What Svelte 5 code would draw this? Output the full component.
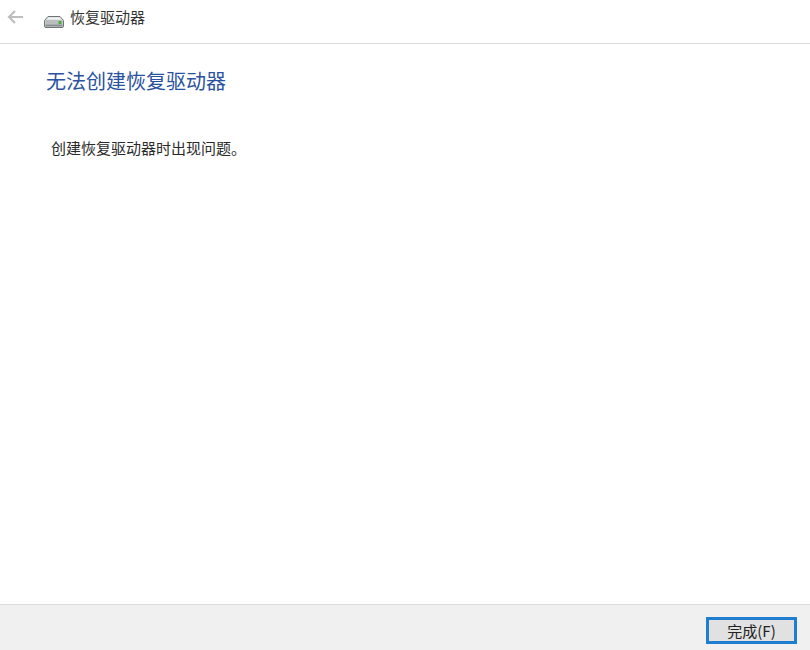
<script>
  const title = '恢复驱动器';
</script>

<div class="window">
  <header class="topbar">
    <svg class="back" width="18" height="14" viewBox="0 0 18 14" aria-hidden="true">
      <path d="M8 1 L2 7 L8 13 M2 7 H16" fill="none" stroke="#bdbdbd" stroke-width="2.2"/>
    </svg>
    <svg class="drive" width="20" height="12" viewBox="0 0 20 12" aria-hidden="true">
      <path d="M4 .5 H16 L19.5 4.5 V10 Q19.5 11.5 18 11.5 H2 Q.5 11.5 .5 10 V4.5 Z" fill="#d4d8d8" stroke="#6f7575"/>
      <path d="M4.5 1.5 H15.5 L17.5 3.5 H2.5 Z" fill="#f2f4f4"/>
      <rect x="1.5" y="4" width="17" height="4.5" fill="#b9bfbf"/>
      <rect x="1.5" y="8.5" width="17" height="2" fill="#868d8d"/>
      <rect x="14.5" y="5" width="3" height="3" fill="#55a83f"/>
    </svg>
    <span class="app-title">{title}</span>
  </header>

  <main class="content">
    <h1>无法创建恢复驱动器</h1>
    <p>创建恢复驱动器时出现问题。</p>
  </main>

  <footer class="footer">
    <button type="button">完成(F)</button>
  </footer>
</div>

<style>
  :global(body) {
    margin: 0;
    background: #fff;
  }
  .window {
    width: 810px;
    height: 650px;
    display: flex;
    flex-direction: column;
    font-family: "Noto Sans CJK SC", "Liberation Sans", sans-serif;
    overflow: hidden;
  }
  .topbar {
    box-sizing: border-box;
    border-bottom: 1px solid #dcdcdc;
    height: 44px;
    display: flex;
    align-items: flex-start;
    padding: 8px 0 0 7px;
  }
  .back {
    margin-top: 2px;
  }
  .drive {
    margin: 8px 0 0 19px;
  }
  .app-title {
    margin-left: 6px;
    font-size: 15px;
    line-height: 17px;
    color: #333;
  }
  .content {
    flex: 1;
    padding: 0 0 0 46px;
  }
  h1 {
    margin: 25px 0 0;
    font-size: 20px;
    font-weight: 400;
    line-height: 24px;
    color: #2a52a0;
    white-space: nowrap;
  }
  p {
    margin: 45px 0 0 5px;
    font-size: 15px;
    line-height: 20px;
    color: #2a2a2a;
    white-space: nowrap;
  }
  .footer {
    height: 46px;
    box-sizing: border-box;
    border-top: 1px solid #dcdcdc;
    background: #f0f0f0;
    display: flex;
    justify-content: flex-end;
    align-items: flex-start;
    padding: 12px 13px 0 0;
  }
  button {
    width: 91px;
    height: 27px;
    box-sizing: border-box;
    border: 3px solid #1f7ed0;
    background: #e1e1e1;
    font: inherit;
    font-size: 15px;
    line-height: 20px;
    color: #222;
    padding: 0;
  }
</style>
